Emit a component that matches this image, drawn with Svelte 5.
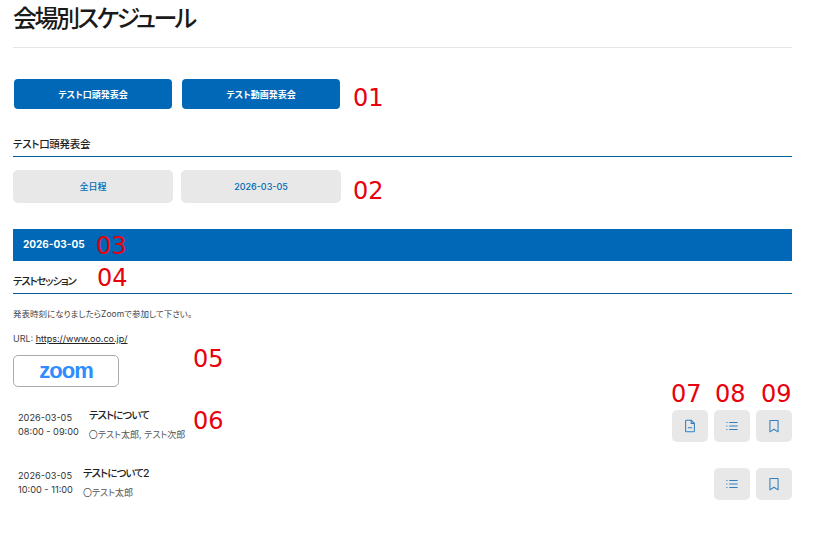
<script lang="ts">
  const sessions = [
    { date: '2026-03-05', time: '08:00 - 09:00', title: 'テストについて', names: '〇テスト太郎, テスト次郎', file: true },
    { date: '2026-03-05', time: '10:00 - 11:00', title: 'テストについて2', names: '〇テスト太郎', file: false }
  ];
</script>

<main class="page">
  <h1>会場別スケジュール</h1>

  <div class="venues">
    <button class="venue">テスト口頭発表会</button>
    <button class="venue">テスト動画発表会</button>
  </div>

  <h2 class="venue-title">テスト口頭発表会</h2>

  <div class="days">
    <button class="day">全日程</button>
    <button class="day">2026-03-05</button>
  </div>

  <div class="date-bar">2026-03-05</div>

  <h3 class="session-title">テストセッション</h3>

  <p class="note">発表時刻になりましたらZoomで参加して下さい。</p>
  <p class="url">URL: <a href="https://www.oo.co.jp/">https://www.oo.co.jp/</a></p>

  <button class="zoom"><span>zoom</span></button>

  {#each sessions as s}
    <div class="row" class:first={s.file}>
      <div class="when">
        <div>{s.date}</div>
        <div>{s.time}</div>
      </div>
      <div class="what">
        <div class="what-title">{s.title}</div>
        <div class="names">{s.names}</div>
      </div>
      <div class="actions">
        {#if s.file}
          <button class="act" aria-label="file">
            <svg viewBox="0 0 24 24" width="14" height="14" fill="none" stroke="#2f7fc1" stroke-width="1.800" stroke-linejoin="round" stroke-linecap="round">
              <path d="M14 2H6a1.500 1.500 0 0 0-1.500 1.500v17A1.500 1.500 0 0 0 6 22h12a1.500 1.500 0 0 0 1.500-1.500V7.500z" />
              <path d="M14 2v5.500h5.500M9 15h6" />
            </svg>
          </button>
        {/if}
        <button class="act" aria-label="list">
          <svg viewBox="0 0 24 24" width="14" height="14" fill="none" stroke="#2f7fc1" stroke-width="1.800" stroke-linecap="round">
            <path d="M8 6h13M8 12h13M8 18h13M3 6h.5M3 12h.5M3 18h.5" />
          </svg>
        </button>
        <button class="act" aria-label="bookmark">
          <svg viewBox="0 0 24 24" width="14" height="14" fill="none" stroke="#2f7fc1" stroke-width="1.800" stroke-linejoin="round">
            <path d="M5 2.500h14V22l-7-4.500L5 22z" />
          </svg>
        </button>
      </div>
    </div>
  {/each}

  <span class="tag" style="left:353px;top:83px">01</span>
  <span class="tag" style="left:353px;top:176px">02</span>
  <span class="tag" style="left:96px;top:231px">03</span>
  <span class="tag" style="left:97px;top:263px">04</span>
  <span class="tag" style="left:193px;top:344px">05</span>
  <span class="tag" style="left:193px;top:406px">06</span>
  <span class="tag" style="left:671px;top:379px">07</span>
  <span class="tag" style="left:715px;top:379px">08</span>
  <span class="tag" style="left:761px;top:379px">09</span>
</main>

<style>
  :global(body) {
    margin: 0;
    background: #fff;
  }

  .page {
    position: relative;
    width: 779px;
    height: 555px;
    padding-left: 13px;
    overflow: hidden;
    font-family: Inter, "Noto Sans CJK JP", sans-serif;
    font-feature-settings: "palt";
    color: #222;
  }

  h1 {
    margin: 0;
    height: 48px;
    padding-top: 1px;
    box-sizing: border-box;
    border-bottom: 1px solid #e5e5e5;
    font-size: 24px;
    line-height: 36px;
    font-weight: 500;
    letter-spacing: -2.500px;
    color: #1a1a1a;
  }

  button {
    border: none;
    padding: 0;
    font-family: inherit;
    font-feature-settings: inherit;
    cursor: pointer;
  }

  .venues {
    display: flex;
    gap: 10px;
    margin: 31px 0 0 1px;
  }

  .venue {
    width: 158px;
    height: 30px;
    border-radius: 4px;
    background: #0068b7;
    color: #fff;
    font-size: 9px;
    font-weight: 700;
  }

  .venue-title {
    margin: 26px 0 0;
    height: 21px;
    border-bottom: 1px solid #005b9a;
    font-size: 10.500px;
    letter-spacing: -0.300px;
    line-height: 19px;
    font-weight: 500;
  }

  .days {
    display: flex;
    gap: 8px;
    margin-top: 13px;
  }

  .day {
    width: 160px;
    height: 33px;
    border-radius: 5px;
    background: #e8e8e8;
    color: #0068b7;
    font-size: 9px;
    font-weight: 500;
  }

  .date-bar {
    margin-top: 26px;
    height: 32px;
    padding-left: 10px;
    background: #0068b7;
    color: #fff;
    font-size: 10px;
    font-weight: 700;
    line-height: 31px;
  }

  .session-title {
    margin: 0;
    height: 33px;
    box-sizing: border-box;
    border-bottom: 1px solid #005b9a;
    font-size: 10.500px;
    letter-spacing: -1.200px;
    line-height: 42px;
    font-weight: 500;
  }

  .note,
  .url {
    margin: 0;
    font-size: 8.500px;
    line-height: 14px;
    color: #444;
  }

  .note {
    margin-top: 13px;
  }

  .url {
    margin-top: 11px;
    font-size: 9px;
  }

  .url a {
    color: #222;
  }

  .zoom {
    display: block;
    margin-top: 9px;
    width: 106px;
    height: 32px;
    box-sizing: border-box;
    border: 1px solid #aaa;
    border-radius: 5px;
    background: #fff;
    color: #2d8cff;
    font-family: "Liberation Sans", sans-serif;
    font-size: 22px;
    font-weight: 700;
    letter-spacing: -1px;
    line-height: 24px;
  }

  .row {
    display: flex;
    align-items: flex-start;
    height: 58px;
    padding-left: 5px;
  }

  .row.first {
    margin-top: 23px;
  }

  .when {
    padding-top: 1px;
    font-size: 9.200px;
    line-height: 14px;
    color: #333;
  }

  .what {
    margin-left: 10px;
    margin-top: -2px;
  }

  .what-title {
    font-size: 10.500px;
    line-height: 16px;
    font-weight: 500;
    letter-spacing: -0.900px;
    color: #222;
  }

  .names {
    margin-top: 4px;
    font-size: 9px;
    line-height: 14px;
    color: #555;
  }

  .actions {
    display: flex;
    gap: 6px;
    margin-left: auto;
  }

  .act {
    display: flex;
    align-items: center;
    justify-content: center;
    width: 36px;
    height: 32px;
    border-radius: 5px;
    background: #e8e8e8;
  }

  .tag {
    position: absolute;
    font-family: "DejaVu Sans", sans-serif;
    font-size: 24px;
    line-height: 30px;
    color: #e8000d;
    font-feature-settings: normal;
  }
</style>
